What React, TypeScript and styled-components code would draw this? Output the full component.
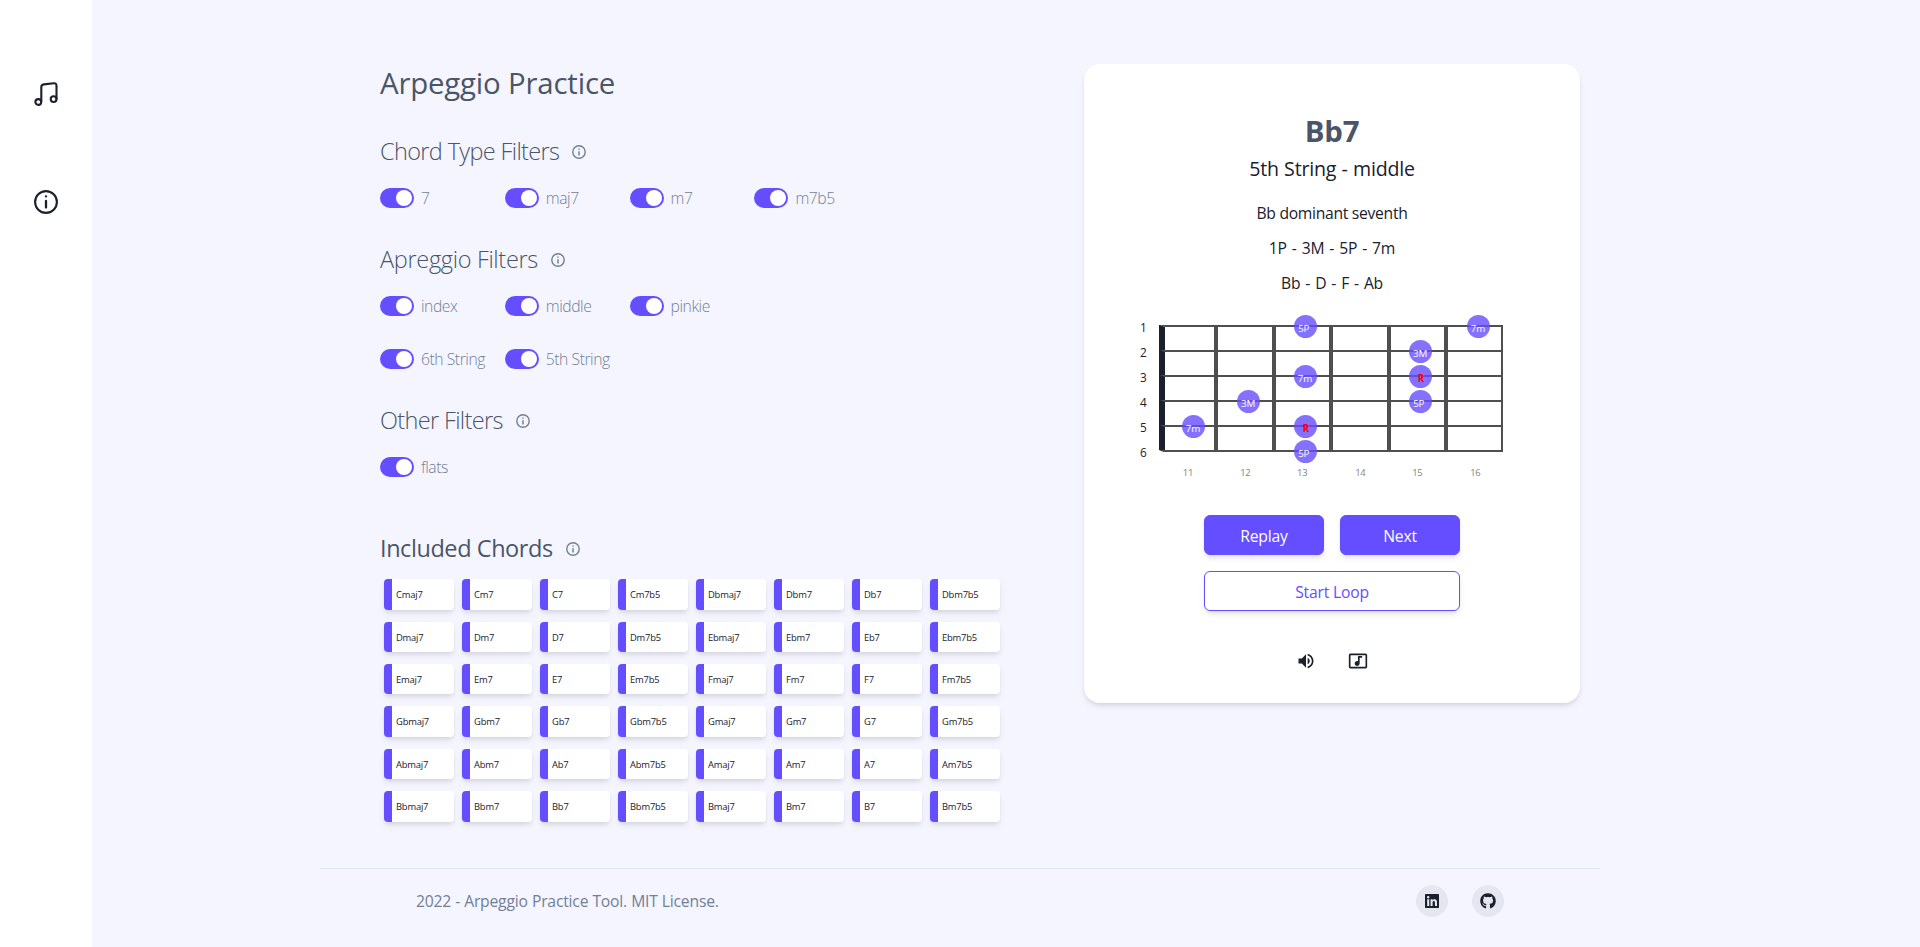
import React from "react";
import styled, { createGlobalStyle } from "styled-components";
import { FaGithub, FaLinkedin } from "react-icons/fa";
import { MdOutlineMusicVideo, MdVolumeUp } from "react-icons/md";

const purple = "#654eff";
const ink = "#1a202c";
const slate = "#4a5568";
const muted = "#718096";

const GlobalStyle = createGlobalStyle`
  * { box-sizing: border-box; }
  body {
    margin: 0;
    background: #f5f5ff;
    color: ${ink};
    font-family: "Segoe UI", "Open Sans", "Noto Sans", sans-serif;
    font-size: 15.7px;
    line-height: 24px;
    letter-spacing: -0.19px;
  }
  h1, h2, p { margin: 0; }
`;

const Page = styled.div`
  display: grid;
  grid-template-columns: 92px 1fr;
  height: 947px;
  overflow: hidden;
`;

const Sidebar = styled.nav`
  background: #fff;
  display: flex;
  flex-direction: column;
  align-items: center;
  gap: 84px;
  padding-top: 82px;
`;

const LineIcon = styled.svg`
  display: block;
  flex: none;
  fill: none;
  stroke: currentColor;
  stroke-linecap: round;
`;

const Content = styled.div`
  width: 1280px;
  margin-left: 228px;
  display: flex;
  flex-direction: column;
`;

const Main = styled.main`
  display: flex;
  align-items: flex-start;
  justify-content: space-between;
  height: 868px;
  padding: 64px 20px 0 60px;
`;

const Controls = styled.section`
  width: 624px;
`;

const Title = styled.h1`
  font-size: 29.4px;
  line-height: 38px;
  height: 36px;
  font-weight: 400;
  color: ${slate};
`;

const Heading = styled.h2<{ $weight?: number; $top?: number; $spacing: number }>`
  display: flex;
  align-items: center;
  gap: 13px;
  height: 32px;
  margin-top: ${(p) => p.$top ?? 35}px;
  font-size: 23.5px;
  line-height: 32px;
  letter-spacing: ${(p) => p.$spacing}px;
  font-weight: ${(p) => p.$weight ?? 300};
  color: ${slate};
  svg { color: ${muted}; margin-top: 2px; }
`;

const ToggleGrid = styled.div`
  display: grid;
  grid-template-columns: repeat(4, 124.8px);
  row-gap: 33px;
  margin-top: 21px;
`;

const Toggle = styled.label`
  display: flex;
  align-items: center;
  gap: 7px;
  height: 20px;
  white-space: nowrap;
  font-weight: 300;
  letter-spacing: -0.45px;
  color: ${muted};
`;

const Track = styled.span`
  display: flex;
  justify-content: flex-end;
  width: 34px;
  height: 20px;
  padding: 2px;
  border-radius: 10px;
  background: ${purple};
`;

const Thumb = styled.span`
  width: 16px;
  height: 16px;
  border-radius: 50%;
  background: #fff;
`;

const ChordGrid = styled.div`
  display: grid;
  grid-template-columns: repeat(8, 70px);
  gap: 12px 8px;
  margin: 15.2px 0 0 4px;
`;

const Chord = styled.div`
  height: 30.4px;
  padding: 9px 4px 7px;
  border-left: 8px solid ${purple};
  border-radius: 4px;
  background: #fff;
  box-shadow: 0 4px 6px -1px rgba(0, 0, 0, 0.1), 0 2px 4px -1px rgba(0, 0, 0, 0.06);
  font-size: 9.4px;
  line-height: 14.4px;
`;

const Card = styled.section`
  display: flex;
  flex-direction: column;
  align-items: center;
  width: 496px;
  height: 638.6px;
  padding-top: 49px;
  border-radius: 16px;
  background: #fff;
  box-shadow: 0 4px 6px -1px rgba(0, 0, 0, 0.1), 0 2px 4px -1px rgba(0, 0, 0, 0.06);
`;

const ChordName = styled.h2`
  font-size: 29.4px;
  line-height: 36px;
  font-weight: 700;
  color: ${slate};
`;

const Position = styled.p`
  margin: 5px 0 17px;
  font-size: 19.6px;
  line-height: 30px;
  word-spacing: 0.4px;
`;

const Details = styled.div`
  display: flex;
  flex-direction: column;
  align-items: center;
  gap: 11px;
`;

const Quality = styled.p`
  letter-spacing: -0.3px;
`;

const Tones = styled.p`
  word-spacing: 1.1px;
`;

const Board = styled.svg`
  display: block;
  margin: 5px 0 25px;
  .string-number { font-size: 11.8px; fill: ${ink}; }
  .fret-number { font-size: 9.4px; fill: #828282; }
  .note { font-size: 9.8px; fill: #fff; }
  .root { font-size: 9.8px; font-weight: 700; fill: #ff0000; }
`;

const Actions = styled.div`
  display: grid;
  grid-template-columns: 120px 120px;
  gap: 16px;
`;

const Button = styled.button<{ $outline?: boolean }>`
  height: 40px;
  padding: 2px 0 0;
  border: 1px solid ${purple};
  border-radius: 6px;
  grid-column: ${(p) => (p.$outline ? "1 / -1" : "auto")};
  background: ${(p) => (p.$outline ? "#fff" : purple)};
  color: ${(p) => (p.$outline ? purple : "#fff")};
  box-shadow: 0 4px 6px -1px rgba(0, 0, 0, 0.1), 0 2px 4px -1px rgba(0, 0, 0, 0.06);
  font: inherit;
  letter-spacing: inherit;
`;

const CardIcons = styled.div`
  display: flex;
  gap: 32px;
  margin-top: 40px;
  font-size: 20px;
  svg { display: block; }
`;

const Footer = styled.footer`
  display: flex;
  align-items: flex-start;
  justify-content: space-between;
  height: 79px;
  padding: 16px 96px 0;
  border-top: 1px solid #dfe8f1;
  color: ${muted};
  line-height: 33px;
  word-spacing: 0.2px;
`;

const Socials = styled.div`
  display: flex;
  gap: 24px;
`;

const Social = styled.a`
  display: flex;
  align-items: center;
  justify-content: center;
  width: 32px;
  height: 32px;
  border-radius: 50%;
  background: rgba(0, 0, 0, 0.06);
  color: ${ink};
  font-size: 16px;
`;

const MusicIcon = () => (
  <LineIcon width="24" height="24" viewBox="0 0 24 24" strokeWidth="2.1">
    <circle cx="4.3" cy="20" r="2.9" />
    <circle cx="19.6" cy="17.1" r="2.9" />
    <path d="M7.3 19.6V5.2q0-2.5 2.5-2.8l10-1.1q2.7-.3 2.7 2.4V17" />
  </LineIcon>
);

const InfoIcon = () => (
  <LineIcon width="24" height="24" viewBox="0 0 24 24" strokeWidth="2.1">
    <circle cx="12" cy="12" r="10.9" />
    <path d="M12 11v6.6M12 6.3v.1" strokeWidth="2.3" />
  </LineIcon>
);

const HintIcon = () => (
  <LineIcon width="14" height="14" viewBox="0 0 14 14" strokeWidth="1.4">
    <circle cx="7" cy="7" r="6.2" />
    <path d="M7 6.2v4.4M7 3.4v1.4" strokeWidth="1.5" strokeLinecap="butt" />
  </LineIcon>
);

const filters = [
  { title: "Chord Type Filters", spacing: -0.64, items: ["7", "maj7", "m7", "m7b5"] },
  { title: "Apreggio Filters", spacing: -0.32, items: ["index", "middle", "pinkie", "", "6th String", "5th String"] },
  { title: "Other Filters", spacing: -0.64, items: ["flats"] },
];

const roots = ["C", "Db", "D", "Eb", "E", "F", "Gb", "G", "Ab", "A", "Bb", "B"];
const chords = roots.flatMap((r) => ["maj7", "m7", "7", "m7b5"].map((t) => r + t));

const stringY = (n: number) => 26 + (n - 1) * 25;
const fretLines = [96, 154, 211, 269, 326];
const fretLabels: [number, number][] = [[11, 68], [12, 125.3], [13, 182.2], [14, 240.3], [15, 297.3], [16, 355.3]];
const noteX: Record<number, number> = { 11: 73.5, 12: 128.5, 13: 185.5, 15: 300.5, 16: 358.5 };
const notes: [number, number, string][] = [
  [1, 13, "5P"], [1, 16, "7m"], [2, 15, "3M"], [3, 13, "7m"], [3, 15, "R"],
  [4, 12, "3M"], [4, 15, "5P"], [5, 11, "7m"], [5, 13, "R"], [6, 13, "5P"],
];

const Fretboard = () => (
  <Board width="424" height="190">
    {fretLines.map((x) => (
      <rect key={x} x={x - 2} y="26" width="4" height="125" fill="#4f4f4f" />
    ))}
    <rect x="381" y="25" width="2" height="127" fill="#4f4f4f" />
    <path d="M39 25h1l5 2v124l-1 1-5-2z" fill={ink} />
    {[1, 2, 3, 4, 5, 6].map((n) => (
      <g key={n}>
        <path d={`M40 ${stringY(n) - 1}H383v2H45z`} fill="#4f4f4f" />
        <text className="string-number" x="23.3" y={stringY(n) + 5.5} textAnchor="middle">{n}</text>
      </g>
    ))}
    {fretLabels.map(([fret, x]) => (
      <text key={fret} className="fret-number" x={x} y="176" textAnchor="middle">{fret}</text>
    ))}
    {notes.map(([s, fret, label]) => {
      const root = label === "R";
      return (
        <g key={`${s}-${fret}`}>
          <circle cx={noteX[fret]} cy={stringY(s) + 0.5} r="11.5" fill={purple} fillOpacity="0.8" />
          <text
            className={root ? "root" : "note"}
            x={noteX[fret] + (root ? 0.5 : label === "5P" ? -1.8 : -0.5)}
            y={stringY(s) + 5.5}
            textAnchor="middle"
          >
            {label}
          </text>
        </g>
      );
    })}
  </Board>
);

export default function App() {
  return (
    <>
      <GlobalStyle />
      <Page>
        <Sidebar>
          <MusicIcon />
          <InfoIcon />
        </Sidebar>
        <Content>
          <Main>
            <Controls>
              <Title>Arpeggio Practice</Title>
              {filters.map((group) => (
                <React.Fragment key={group.title}>
                  <Heading $spacing={group.spacing}>{group.title}<HintIcon /></Heading>
                  <ToggleGrid>
                    {group.items.map((item, i) =>
                      item ? (
                        <Toggle key={item}><Track><Thumb /></Track>{item}</Toggle>
                      ) : (
                        <span key={i} />
                      )
                    )}
                  </ToggleGrid>
                </React.Fragment>
              ))}
              <Heading $weight={400} $top={55} $spacing={-0.43}>Included Chords<HintIcon /></Heading>
              <ChordGrid>
                {chords.map((c) => <Chord key={c}>{c}</Chord>)}
              </ChordGrid>
            </Controls>
            <Card>
              <ChordName>Bb7</ChordName>
              <Position>5th String - middle</Position>
              <Details>
                <Quality>Bb dominant seventh</Quality>
                <Tones>1P - 3M - 5P - 7m</Tones>
                <Tones>Bb - D - F - Ab</Tones>
              </Details>
              <Fretboard />
              <Actions>
                <Button>Replay</Button>
                <Button>Next</Button>
                <Button $outline>Start Loop</Button>
              </Actions>
              <CardIcons>
                <MdVolumeUp />
                <MdOutlineMusicVideo />
              </CardIcons>
            </Card>
          </Main>
          <Footer>
            <p>2022 - Arpeggio Practice Tool. MIT License.</p>
            <Socials>
              <Social><FaLinkedin /></Social>
              <Social><FaGithub /></Social>
            </Socials>
          </Footer>
        </Content>
      </Page>
    </>
  );
}
